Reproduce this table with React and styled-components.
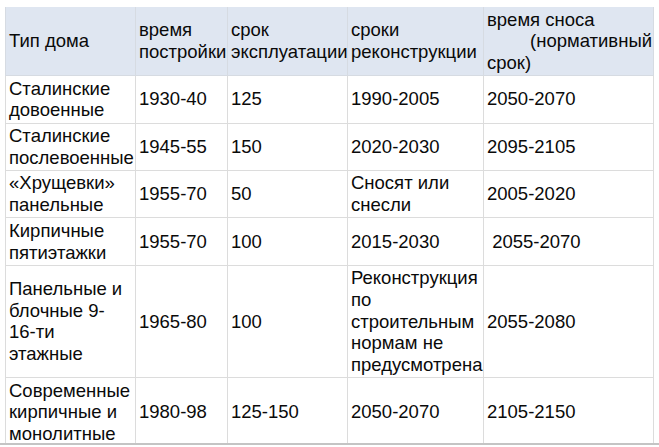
import React from 'react';
import styled, { createGlobalStyle } from 'styled-components';

const GlobalStyle = createGlobalStyle`
  html, body {
    margin: 0;
    padding: 0;
    background: #ffffff;
  }
  body {
    font-family: "Liberation Sans", Arial, sans-serif;
    color: #000;
  }
`;

const Page = styled.div`
  width: 659px;
  height: 445px;
  overflow: hidden;
  padding: 7px 0 0 5px;
  box-sizing: border-box;
  background: #fff;
  border-bottom: 2px solid #c4c4c4;
`;

const Table = styled.table`
  width: 648px;
  border-collapse: collapse;
  table-layout: fixed;
  font-size: 18.5px;
  line-height: 21.7px;
  color: #0a0a0a;
`;

const HeadCell = styled.th`
  background: #dfe6f1;
  font-weight: normal;
  text-align: left;
  vertical-align: middle;
  padding: 1.5px 2px 1.5px 3px;
  border: 1px solid #d6dbe2;
  border-top: none;
`;

const Cell = styled.td`
  vertical-align: middle;
  padding: 1.5px 2px 1.5px 3px;
  border: 1px solid #dcdcdc;
  white-space: ${(p) => (p.$pre ? 'pre' : 'normal')};
`;

const Indent = styled.span`
  display: block;
  padding-left: 43px;
  white-space: nowrap;
`;

// ширины колонок взяты со скриншота
const widths = [130, 92, 120, 136, 170];

const rows = [
  ['Сталинские довоенные', '1930-40', '125', '1990-2005', '2050-2070'],
  ['Сталинские послевоенные', '1945-55', '150', '2020-2030', '2095-2105'],
  ['«Хрущевки» панельные', '1955-70', '50', 'Сносят или снесли', '2005-2020'],
  ['Кирпичные пятиэтажки', '1955-70', '100', '2015-2030', ' 2055-2070'],
  [
    <>Панельные и блочные 9-<br />16-ти<br />этажные</>,
    '1965-80',
    '100',
    'Реконструкция по строительным нормам не предусмотрена',
    '2055-2080',
  ],
  ['Современные кирпичные и монолитные', '1980-98', '125-150', '2050-2070', '2105-2150'],
];

const App = () => {
  return (
    <Page>
      <GlobalStyle />
      <Table>
        <colgroup>
          {widths.map((w, i) => (
            <col key={i} style={{ width: w }} />
          ))}
        </colgroup>
        <thead>
          <tr>
            <HeadCell>Тип дома</HeadCell>
            <HeadCell>время постройки</HeadCell>
            <HeadCell>срок эксплуатации</HeadCell>
            <HeadCell>сроки реконструкции</HeadCell>
            <HeadCell>
              время сноса
              <Indent>(нормативный</Indent>
              срок)
            </HeadCell>
          </tr>
        </thead>
        <tbody>
          {rows.map((row, i) => (
            <tr key={i}>
              {row.map((text, j) => (
                <Cell key={j} $pre={typeof text === 'string' && text.startsWith(' ')}>
                  {text}
                </Cell>
              ))}
            </tr>
          ))}
        </tbody>
      </Table>
    </Page>
  );
};

export default App;
